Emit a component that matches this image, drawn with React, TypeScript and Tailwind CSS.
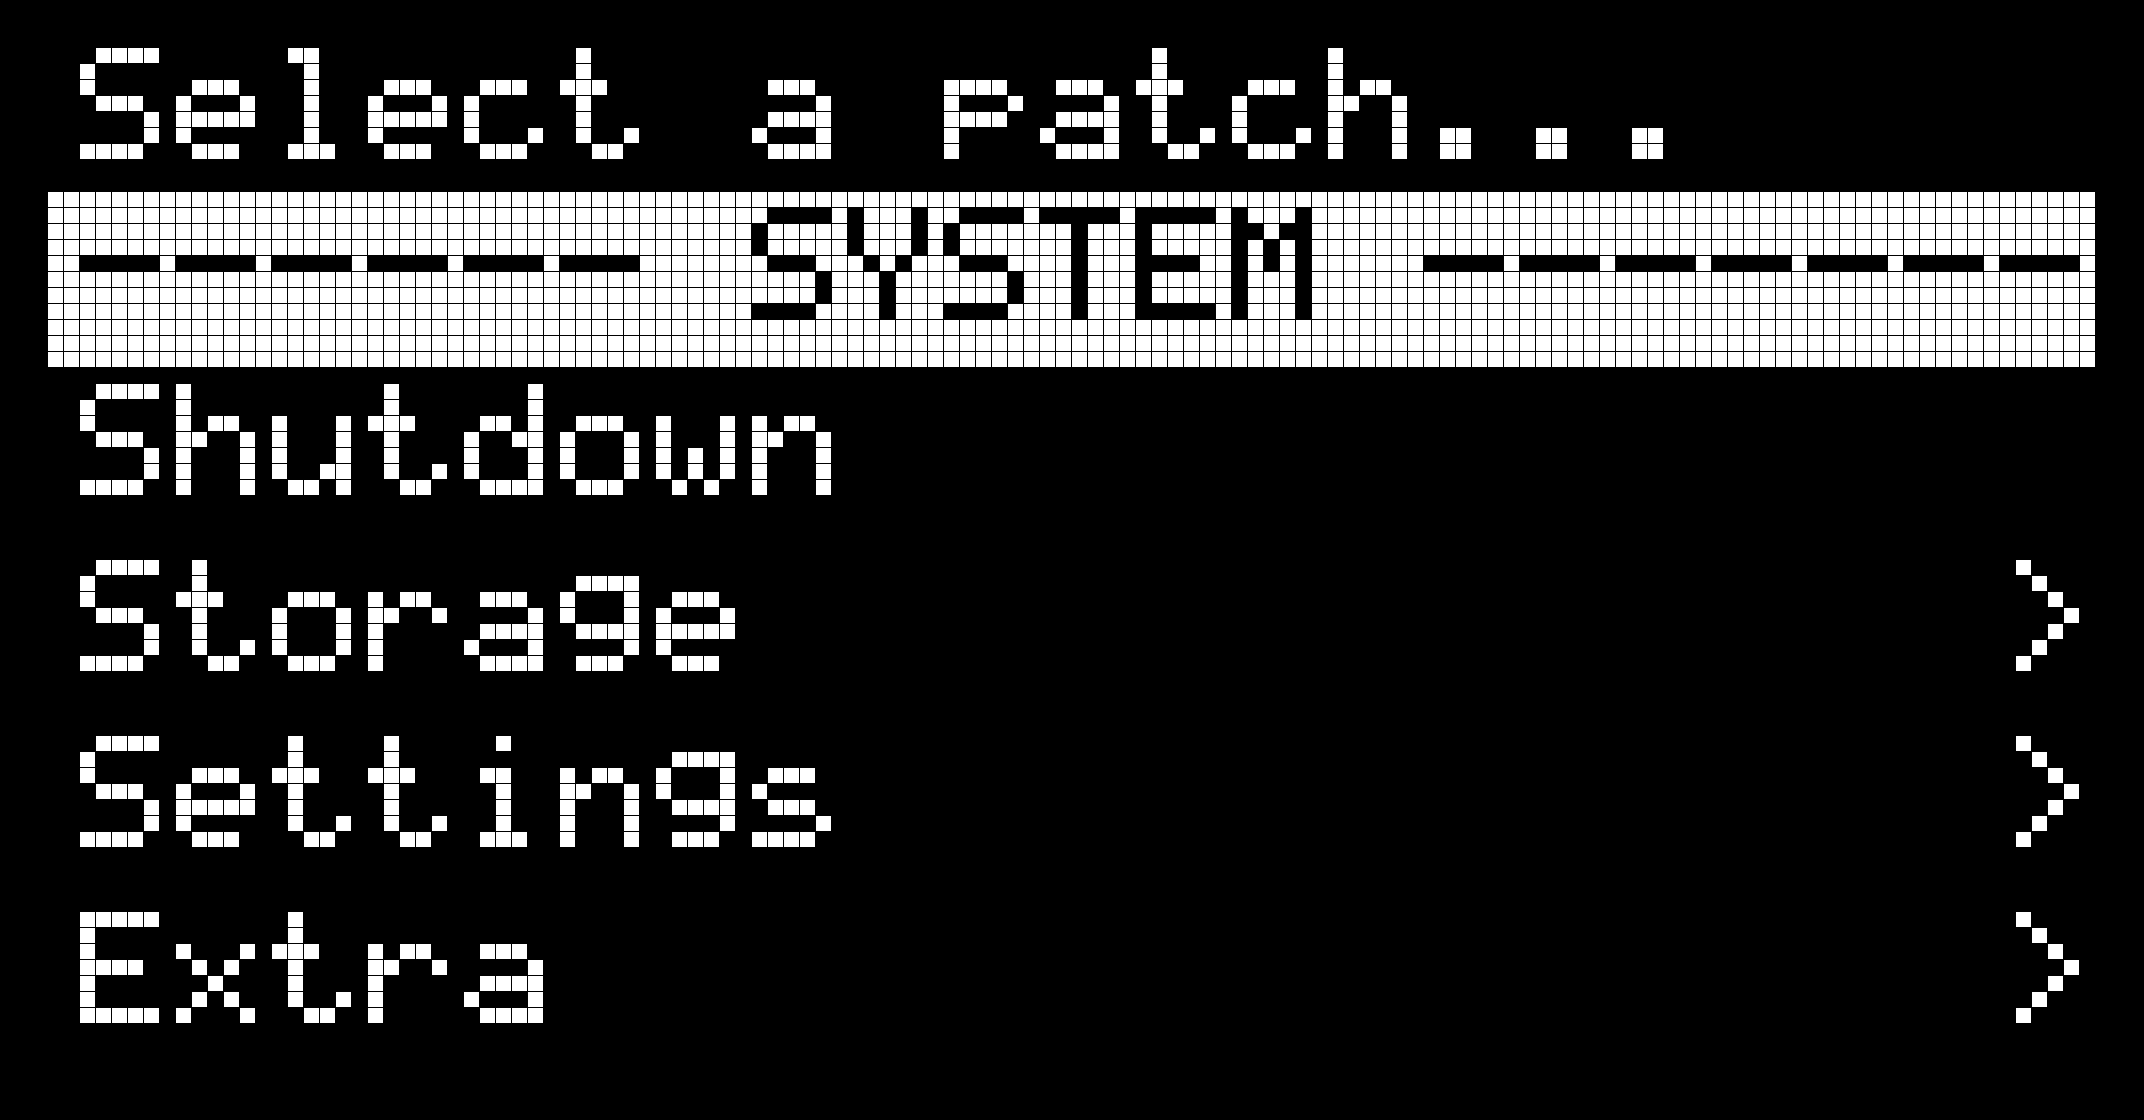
// 5x7 dot-matrix glyphs, rows top to bottom
const FONT: Record<string, string[]> = {
  ' ': ['.....', '.....', '.....', '.....', '.....', '.....', '.....'],
  '-': ['.....', '.....', '.....', '#####', '.....', '.....', '.....'],
  '.': ['.....', '.....', '.....', '.....', '.....', '.##..', '.##..'],
  '>': ['.#...', '..#..', '...#.', '....#', '...#.', '..#..', '.#...'],
  E: ['#####', '#....', '#....', '####.', '#....', '#....', '#####'],
  M: ['#...#', '##.##', '#.#.#', '#.#.#', '#...#', '#...#', '#...#'],
  S: ['.####', '#....', '#....', '.###.', '....#', '....#', '####.'],
  T: ['#####', '..#..', '..#..', '..#..', '..#..', '..#..', '..#..'],
  Y: ['#...#', '#...#', '#...#', '.#.#.', '..#..', '..#..', '..#..'],
  a: ['.....', '.....', '.###.', '....#', '.####', '#...#', '.####'],
  c: ['.....', '.....', '.###.', '#....', '#....', '#...#', '.###.'],
  d: ['....#', '....#', '.##.#', '#..##', '#...#', '#...#', '.####'],
  e: ['.....', '.....', '.###.', '#...#', '#####', '#....', '.###.'],
  g: ['.....', '.####', '#...#', '#...#', '.####', '....#', '.###.'],
  h: ['#....', '#....', '#.##.', '##..#', '#...#', '#...#', '#...#'],
  i: ['..#..', '.....', '.##..', '..#..', '..#..', '..#..', '.###.'],
  l: ['.##..', '..#..', '..#..', '..#..', '..#..', '..#..', '.###.'],
  n: ['.....', '.....', '#.##.', '##..#', '#...#', '#...#', '#...#'],
  o: ['.....', '.....', '.###.', '#...#', '#...#', '#...#', '.###.'],
  p: ['.....', '.....', '####.', '#...#', '####.', '#....', '#....'],
  r: ['.....', '.....', '#.##.', '##..#', '#....', '#....', '#....'],
  s: ['.....', '.....', '.###.', '#....', '.###.', '....#', '####.'],
  t: ['.#...', '.#...', '###..', '.#...', '.#...', '.#..#', '..##.'],
  u: ['.....', '.....', '#...#', '#...#', '#...#', '#..##', '.##.#'],
  w: ['.....', '.....', '#...#', '#...#', '#.#.#', '#.#.#', '.#.#.'],
  x: ['.....', '.....', '#...#', '.#.#.', '..#..', '.#.#.', '#...#'],
};

const Glyph = ({ ch, on }: { ch: string; on: string }) => {
  const rows = FONT[ch] ?? FONT[' '];
  return (
    <div className="grid grid-cols-[repeat(5,15px)] grid-rows-[repeat(7,15px)] gap-px">
      {rows
        .join('')
        .split('')
        .map((p, i) => (
          <div key={i} className={p === '#' ? on : ''} />
        ))}
    </div>
  );
};

const PixelText = ({ text, inverted = false }: { text: string; inverted?: boolean }) => (
  <div className="relative flex gap-[17px]">
    {text.split('').map((ch, i) => (
      <Glyph key={i} ch={ch} on={inverted ? 'bg-black' : 'bg-white'} />
    ))}
    {/* real text laid over the dots, 96px advance per character */}
    <span className="absolute left-0 top-0 h-[111px] whitespace-pre font-['Liberation_Mono',monospace] text-[90px] leading-[111px] tracking-[42px] text-transparent">
      {text}
    </span>
  </div>
);

const items = [
  { label: 'Shutdown', sub: false },
  { label: 'Storage', sub: true },
  { label: 'Settings', sub: true },
  { label: 'Extra', sub: true },
];

const App = () => {
  return (
    <div className="min-h-screen bg-black p-12">
      <div className="flex w-[2048px] flex-col">
        <div className="h-[144px] pl-8">
          <PixelText text="Select a patch..." />
        </div>

        <div className="h-[176px] bg-white bg-[linear-gradient(to_right,transparent_15px,black_15px),linear-gradient(to_bottom,transparent_15px,black_15px)] bg-[length:16px_16px] pl-8 pt-4">
          <PixelText text="------ SYSTEM -------" inverted />
        </div>

        {items.map((item) => (
          <div key={item.label} className="flex h-[176px] items-start justify-between pl-8 pr-[17px] pt-4">
            <PixelText text={item.label} />
            {item.sub && <PixelText text=">" />}
          </div>
        ))}
      </div>
    </div>
  );
};

export default App;
